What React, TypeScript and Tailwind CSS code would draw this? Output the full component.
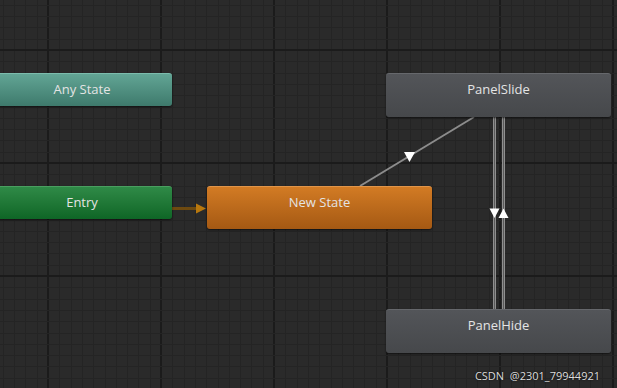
const W = 617
const H = 388
const STEP = 11.3

const xs: number[] = []
for (let k = -5; k < 60; k++) {
  const x = 48 + STEP * k
  if (x > -2 && x < W + 2) xs.push(k)
}
const ys: number[] = []
for (let k = -5; k < 40; k++) {
  const y = 50 + STEP * k
  if (y > -2 && y < H + 2) ys.push(k)
}

function Grid() {
  return (
    <svg className="absolute inset-0" width={W} height={H}>
      {xs.map((k) => {
        const x = Math.round(48 + STEP * k)
        const major = k % 10 === 0
        return (
          <rect key={'v' + k} x={major ? x - 1 : x} y={0} width={major ? 2 : 1} height={H} fill={major ? '#1b1b1b' : '#242424'} />
        )
      })}
      {ys.map((k) => {
        const y = Math.round(50 + STEP * k)
        const major = k % 10 === 0
        return (
          <rect key={'h' + k} x={0} y={major ? y - 1 : y} width={W} height={major ? 2 : 1} fill={major ? '#1b1b1b' : '#242424'} />
        )
      })}
    </svg>
  )
}

function Links() {
  return (
    <svg className="absolute inset-0" width={W} height={H}>
      {/* entry -> new state */}
      <line x1={172} y1={208.5} x2={198} y2={208.5} stroke="#6e4a10" strokeWidth={3} />
      <polygon points="196,203.5 206,208.5 196,213.5" fill="#b8780e" />

      {/* new state <-> panel slide */}
      <line x1={360} y1={186} x2={474} y2={117} stroke="#8c8c8c" strokeWidth={2} />
      <polygon points="404,152 415,152 409.5,162" fill="#ffffff" />

      {/* panel slide <-> panel hide */}
      <rect x={493} y={117} width={3} height={192} fill="#8f8f8f" />
      <rect x={494} y={117} width={1} height={192} fill="#5a5a5a" />
      <rect x={502} y={117} width={3} height={192} fill="#8f8f8f" />
      <rect x={503} y={117} width={1} height={192} fill="#5a5a5a" />
      <polygon points="489.5,208.5 499.5,208.5 494.5,218" fill="#ffffff" />
      <polygon points="498.5,218 508.5,218 503.5,208.5" fill="#ffffff" />
    </svg>
  )
}

function Node({ label, className }: { label: string; className: string }) {
  return (
    <div
      className={`absolute rounded-[3px] shadow-[0_1px_2px_rgba(0,0,0,0.6)] pt-[6px] text-center text-[13px] leading-[18px] text-[#e4e4e4] ${className}`}
    >
      {label}
    </div>
  )
}

export default function App() {
  return (
    <div
      className="relative w-[617px] h-[388px] overflow-hidden bg-[#2a2a2a]"
      style={{ fontFamily: '"Open Sans", "Noto Sans", sans-serif' }}
    >
      <Grid />
      <Links />

      <Node
        label="Any State"
        className="left-[-8px] top-[73px] w-[180px] h-[33px] bg-gradient-to-b from-[#62a595] to-[#3e7a6c] border-t border-[#7cbcad]"
      />
      <Node
        label="Entry"
        className="left-[-8px] top-[186px] w-[180px] h-[33px] bg-gradient-to-b from-[#2f8a47] to-[#0e6626] border-t border-[#4a9f60]"
      />
      <Node
        label="New State"
        className="left-[207px] top-[186px] w-[225px] h-[43px] bg-gradient-to-b from-[#d27b24] to-[#a55913] border-t border-[#e0954a]"
      />
      <Node
        label="PanelSlide"
        className="left-[386px] top-[73px] w-[225px] h-[44px] bg-gradient-to-b from-[#535559] to-[#46484b] border-t border-[#66686c]"
      />
      <Node
        label="PanelHide"
        className="left-[386px] top-[309px] w-[225px] h-[44px] bg-gradient-to-b from-[#535559] to-[#46484b] border-t border-[#66686c]"
      />

      <div className="absolute right-[17px] bottom-[6px] text-[11px] leading-[12px] text-[#dcdcdc] [text-shadow:0_0_2px_rgba(0,0,0,0.8)]">
        CSDN&nbsp; @2301_79944921
      </div>
    </div>
  )
}
